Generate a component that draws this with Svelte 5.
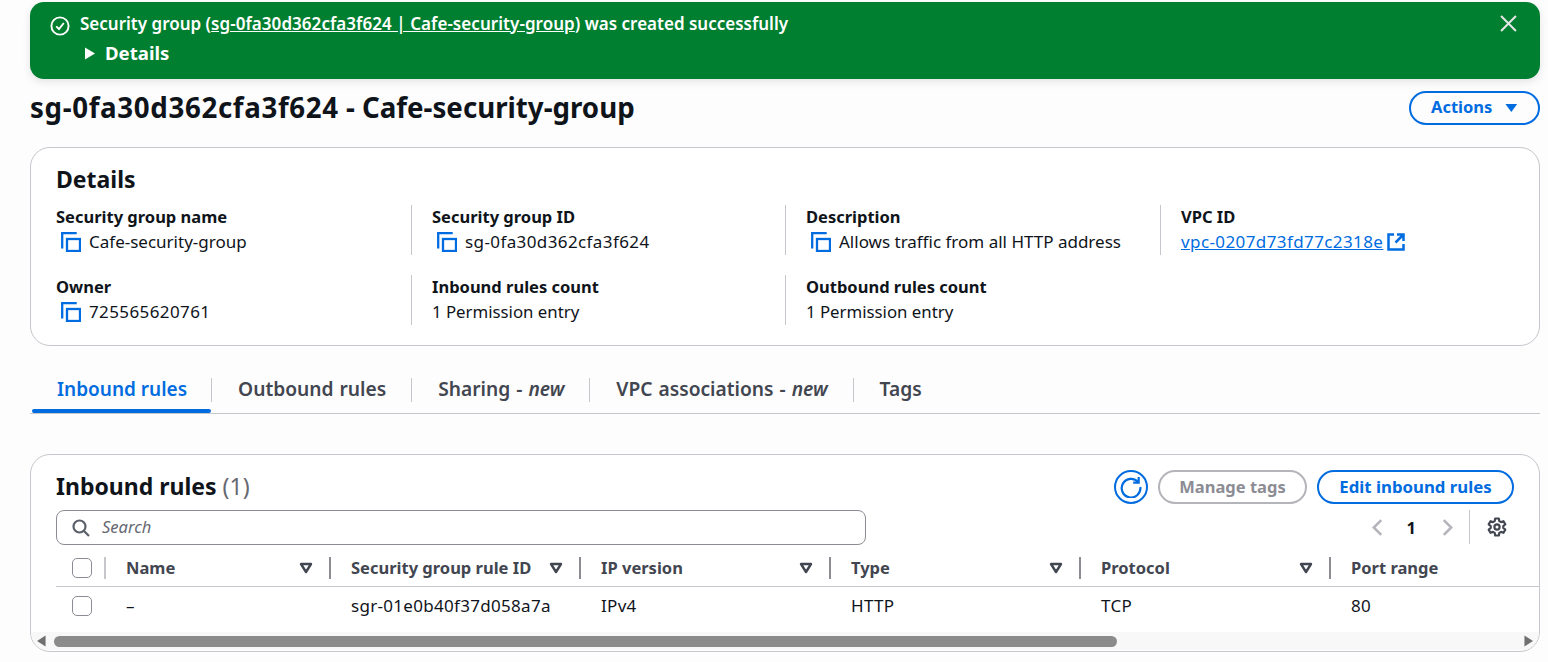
<script>
  const details = [
    [
      { label: 'Security group name', value: 'Cafe-security-group', copy: true },
      { label: 'Security group ID', value: 'sg-0fa30d362cfa3f624', copy: true, num: true },
      { label: 'Description', value: 'Allows traffic from all HTTP address', copy: true },
      { label: 'VPC ID', value: 'vpc-0207d73fd77c2318e', link: true, num: true }
    ],
    [
      { label: 'Owner', value: '725565620761', copy: true, num: true },
      { label: 'Inbound rules count', value: '1 Permission entry' },
      { label: 'Outbound rules count', value: '1 Permission entry' }
    ]
  ];
  const tabs = [
    { name: 'Inbound rules', active: true },
    { name: 'Outbound rules' },
    { name: 'Sharing - ', em: 'new' },
    { name: 'VPC associations - ', em: 'new' },
    { name: 'Tags' }
  ];
  const columns = ['Name', 'Security group rule ID', 'IP version', 'Type', 'Protocol', 'Port range'];
  const row = ['–', 'sgr-01e0b40f37d058a7a', 'IPv4', 'HTTP', 'TCP', '80'];
</script>

<div class="page">
  <div class="alert">
    <svg class="ok" viewBox="0 0 20 20" width="20" height="20" fill="none" stroke="#fff" stroke-width="1.9"><circle cx="10" cy="10" r="8.6"/><path d="M6.2 10.4 9 13l4.8-6"/></svg>
    <div class="alert-body">
      <div class="alert-msg">Security group (<a href="#a">sg-0fa30d362cfa3f624 | Cafe-security-group</a>) was created successfully</div>
      <div class="alert-more"><svg viewBox="0 0 10 13" width="10" height="13"><path d="M0 0.500 10 6.500 0 12.500z" fill="#fff"/></svg>Details</div>
    </div>
    <svg class="close" viewBox="0 0 16 16" width="17" height="17" fill="none" stroke="#e6e6e6" stroke-width="1.9"><path d="M1 1l14 14M15 1 1 15"/></svg>
  </div>

  <div class="title-row">
    <h1><span class="h-id">sg-0fa30d362cfa3f624</span> - Cafe-security-group</h1>
    <button class="btn actions">Actions <svg viewBox="0 0 14 10" width="14" height="10"><path d="M0.500 0.500h13L7 9.500z" fill="#006ce0"/></svg></button>
  </div>

  <section class="card details">
    <h2>Details</h2>
    {#each details as items}
      <div class="kv-row">
        {#each items as d}
          <div class="kv">
            <div class="k">{d.label}</div>
            <div class="v" class:plain={!d.copy && !d.link} class:num={d.num}>
              {#if d.copy}
                <svg class="copy" viewBox="0 0 20 20" width="20" height="20" fill="none" stroke="#006ce0" stroke-width="2.300"><path d="M1.200 16.500V1.200h14.500"/><rect x="6" y="7" width="13" height="12"/></svg>
              {/if}
              {#if d.link}
                <a href="#v">{d.value} </a><svg class="ext" viewBox="0 0 18 18" width="18" height="18" fill="none" stroke="#006ce0" stroke-width="2.500"><path d="M7 1.500H1.500v15h15V11"/><path d="M10 1.500h6.500V8M16 2 8.500 9.500"/></svg>
              {:else}
                <span>{d.value}</span>
              {/if}
            </div>
          </div>
        {/each}
      </div>
    {/each}
  </section>

  <nav class="tabs">
    {#each tabs as t}
      <div class="tab" class:active={t.active}><span>{t.name}{#if t.em}<em>{t.em}</em>{/if}</span></div>
    {/each}
  </nav>

  <section class="card rules">
    <div class="rules-head">
      <h2>Inbound rules <span class="count">(1)</span></h2>
      <div class="rules-actions">
        <button class="icon-btn" aria-label="Refresh"><svg viewBox="0 0 20 20" width="22" height="22" fill="none" stroke="#006ce0" stroke-width="2"><path d="M16.500 5.500A8.500 8.500 0 1 0 18.500 10"/><path d="M17 1v5h-5"/></svg></button>
        <button class="btn disabled">Manage tags</button>
        <button class="btn edit">Edit inbound rules</button>
      </div>
    </div>
    <div class="tools">
      <div class="search">
        <svg viewBox="0 0 18 18" width="18" height="18" fill="none" stroke="#5a5f69" stroke-width="2.200"><circle cx="7.500" cy="7.500" r="6"/><path d="M12 12l5 5"/></svg>
        <span>Search</span>
      </div>
      <div class="pager">
        <svg viewBox="0 0 10 16" width="11" height="17" fill="none" stroke="#b4b4bb" stroke-width="2.400"><path d="M8.500 1 1.500 8l7 7"/></svg>
        <b>1</b>
        <svg viewBox="0 0 10 16" width="11" height="17" fill="none" stroke="#b4b4bb" stroke-width="2.400"><path d="M1.500 1 8.500 8l-7 7"/></svg>
        <i class="sep"></i>
        <svg viewBox="0 0 20 20" width="20" height="20" fill="none" stroke="#424650" stroke-width="2.200"><path d="M8.200 1.500h3.600l.5 2.600 1.700 1 2.500-.9 1.800 3.100-2 1.700v2l2 1.700-1.800 3.100-2.500-.9-1.700 1-.5 2.600H8.200l-.5-2.600-1.700-1-2.500.9-1.800-3.100 2-1.700V9L1.700 7.300l1.800-3.100 2.500.9 1.700-1z" stroke-linejoin="round"/><circle cx="10" cy="10" r="2.600"/></svg>
      </div>
    </div>
    <div class="table">
      <div class="tr th">
        <div class="cell check"><i class="box"></i><i class="rule light"></i></div>
        {#each columns as c, i}
          <div class="cell">
            <span>{c}</span>
            {#if i < 5}
              <svg viewBox="0 0 14 12" width="14" height="12" fill="none" stroke="#424650" stroke-width="2.400"><path d="M2 2h10L7 10z" stroke-linejoin="round"/></svg>
              <i class="rule"></i>
            {/if}
          </div>
        {/each}
      </div>
      <div class="tr td">
        <div class="cell check"><i class="box"></i></div>
        {#each row as c}
          <div class="cell"><span>{c}</span></div>
        {/each}
      </div>
    </div>
    <div class="scroll">
      <svg viewBox="0 0 10 12" width="9" height="12"><path d="M9.500 0v12L0 6z" fill="#6f6f6f"/></svg>
      <div class="track"><div class="thumb"></div></div>
      <svg viewBox="0 0 10 12" width="9" height="12"><path d="M0.500 0v12L10 6z" fill="#6f6f6f"/></svg>
    </div>
  </section>
</div>

<style>
  :global(body) {
    margin: 0;
    background: #fdfdfd;
    overflow: hidden;
  }
  .page {
    box-sizing: border-box;
    width: 1548px;
    height: 662px;
    overflow: hidden;
    padding: 2px 8px 0 30px;
    font-family: "Noto Sans", sans-serif;
    font-size: 16.5px;
    color: #0f141a;
  }
  h1, h2 { margin: 0; font-weight: 700; }
  i { font-style: normal; display: block; }
  button { font: inherit; background: none; cursor: pointer; }

  .alert {
    display: flex;
    align-items: flex-start;
    height: 77px;
    box-sizing: border-box;
    padding: 12px 23px 0 20px;
    background: #017f30;
    border-radius: 14px;
    color: #fff;
    font-weight: 600;
    font-size: 17px;
    box-shadow: 0 3px 8px rgba(0, 0, 0, 0.1);
  }
  .ok { flex: none; margin: 2px 10px 0 0; }
  .alert-body { flex: 1; }
  .alert-msg { line-height: 20px; }
  .alert a { color: #fff; text-decoration: underline; letter-spacing: 0.05px; }
  .alert-more {
    display: flex;
    align-items: center;
    gap: 10px;
    margin: 9px 0 0 5px;
    font-size: 18.600px;
    font-weight: 700;
    line-height: 20px;
  }
  .close { flex: none; margin: 1px 0 0; }

  .title-row {
    display: flex;
    justify-content: space-between;
    align-items: flex-start;
    margin-top: 12px;
    height: 56px;
  }
  h1 { font-size: 27.7px; line-height: 32px; }
  .h-id { letter-spacing: 0.65px; }
  .btn {
    box-sizing: border-box;
    height: 34px;
    border: 2px solid #006ce0;
    border-radius: 17px;
    color: #006ce0;
    font-weight: 700;
    font-size: 16.5px;
    padding: 0 20px 2px;
  }
  .actions {
    width: 131px;
    display: flex;
    align-items: center;
    justify-content: center;
    gap: 13px;
    padding-bottom: 4px;
  }
  .actions svg { margin-top: 3px; }

  .card {
    background: #fff;
    border: 1px solid #c6c6cd;
    border-radius: 20px;
  }
  .details {
    box-sizing: border-box;
    height: 199px;
    padding: 16px 25px 0;
  }
  .details h2 { font-size: 23px; line-height: 30px; margin-bottom: 11px; }
  .kv-row {
    display: grid;
    grid-template-columns: 355px 374px 375px 375px;
    margin-bottom: 20px;
  }
  .kv { height: 50px; padding-left: 20px; border-left: 1px solid #c6c6cd; }
  .kv:first-child { padding-left: 0; border-left: 0; }
  .k { font-weight: 700; line-height: 24px; }
  .v { display: flex; align-items: center; gap: 8px; height: 24px; padding-left: 5px; font-size: 17px; }
  .v.num { letter-spacing: 0.4px; }
  .v.plain { padding-left: 0; font-size: 16.8px; }
  .kv:last-child .v { padding-left: 0; }
  .copy { flex: none; margin-top: 2px; }
  .v a { color: #006ce0; text-decoration: underline; white-space: pre; }
  .ext { margin-left: -4px; margin-top: 1px; }

  .tabs {
    display: flex;
    height: 47px;
    margin-top: 20px;
    border-bottom: 1px solid #c6c6cd;
    padding-left: 2px;
  }
  .tab {
    position: relative;
    box-sizing: border-box;
    height: 47px;
    padding: 11px 25px 0 27px;
    font-size: 19.200px;
    font-weight: 600;
    line-height: 24px;
    word-spacing: 1px;
    color: #424650;
    white-space: pre;
  }
  .tab + .tab::before {
    content: "";
    position: absolute;
    left: 0;
    top: 12px;
    height: 24px;
    width: 1px;
    background: #c6c6cd;
  }
  .tab.active { color: #006ce0; padding: 11px 24px 0 25px; font-size: 19px; word-spacing: 0; }
  .tab.active::after {
    content: "";
    position: absolute;
    left: 0;
    right: 0;
    bottom: 0;
    height: 4px;
    border-radius: 2px;
    background: #006ce0;
  }
  .tab em { font-style: italic; }

  .rules {
    box-sizing: border-box;
    height: 198px;
    margin-top: 40px;
    padding-top: 15px;
    overflow: hidden;
    position: relative;
  }
  .rules-head {
    display: flex;
    justify-content: space-between;
    align-items: center;
    height: 34px;
    padding: 0 25px;
  }
  .rules-head h2 { font-size: 23px; line-height: 32px; margin-bottom: 2px; }
  .count { font-weight: 400; color: #656871; }
  .rules-actions { display: flex; align-items: center; gap: 10px; }
  .icon-btn {
    display: flex;
    align-items: center;
    justify-content: center;
    box-sizing: border-box;
    width: 34px;
    height: 34px;
    padding: 0;
    border: 2px solid #006ce0;
    border-radius: 50%;
  }
  .btn.disabled { width: 149px; padding: 0 0 2px; border-color: #b4b4bb; color: #8c8c94; }
  .btn.edit { width: 197px; padding: 0 0 1px; font-size: 16.800px; }

  .tools {
    display: flex;
    justify-content: space-between;
    align-items: flex-start;
    height: 40px;
    margin-top: 6px;
    padding: 0 32px 0 25px;
  }
  .search {
    display: flex;
    align-items: center;
    gap: 12px;
    box-sizing: border-box;
    width: 810px;
    height: 35px;
    padding-left: 15px;
    border: 1px solid #8c8c94;
    border-radius: 8px;
    font-style: italic;
    color: #656871;
  }
  .search span { margin-bottom: 2px; }
  .pager { display: flex; align-items: center; }
  .pager b { margin: 0 26px 0 24px; font-weight: 700; }
  .pager .sep { width: 1px; height: 34px; background: #c6c6cd; margin: 0 17px 0 16px; }

  .tr {
    display: grid;
    grid-template-columns: 50px 225px repeat(5, 250px);
    width: 1600px;
    margin-left: 25px;
  }
  .th { height: 36px; border-bottom: 1px solid #c6c6cd; font-weight: 700; color: #424650; }
  .td { height: 38px; margin-bottom: 7px; }
  .cell {
    position: relative;
    display: flex;
    align-items: center;
    justify-content: space-between;
    padding: 0 18px 0 20px;
    min-width: 0;
    white-space: nowrap;
  }
  .cell span { margin-bottom: 2px; }
  .td .cell { font-size: 17px; letter-spacing: 0.3px; }
  .cell svg { flex: none; }
  .check { padding: 0 0 0 16px; justify-content: flex-start; }
  .box {
    box-sizing: border-box;
    width: 20px;
    height: 20px;
    border: 1px solid #8c8c94;
    border-radius: 5px;
    background: #fff;
  }
  .rule {
    position: absolute;
    right: 0;
    top: 7px;
    width: 2px;
    height: 22px;
    background: #8c8c94;
  }
  .rule.light { background: #c6c6cd; }

  .scroll {
    display: flex;
    align-items: center;
    gap: 8px;
    height: 18px;
    padding: 0 6px;
    background: #f8f8f8;
  }
  .track { flex: 1; height: 11px; }
  .thumb { width: 1063px; height: 11px; border-radius: 6px; background: #8b8b8b; }
</style>
